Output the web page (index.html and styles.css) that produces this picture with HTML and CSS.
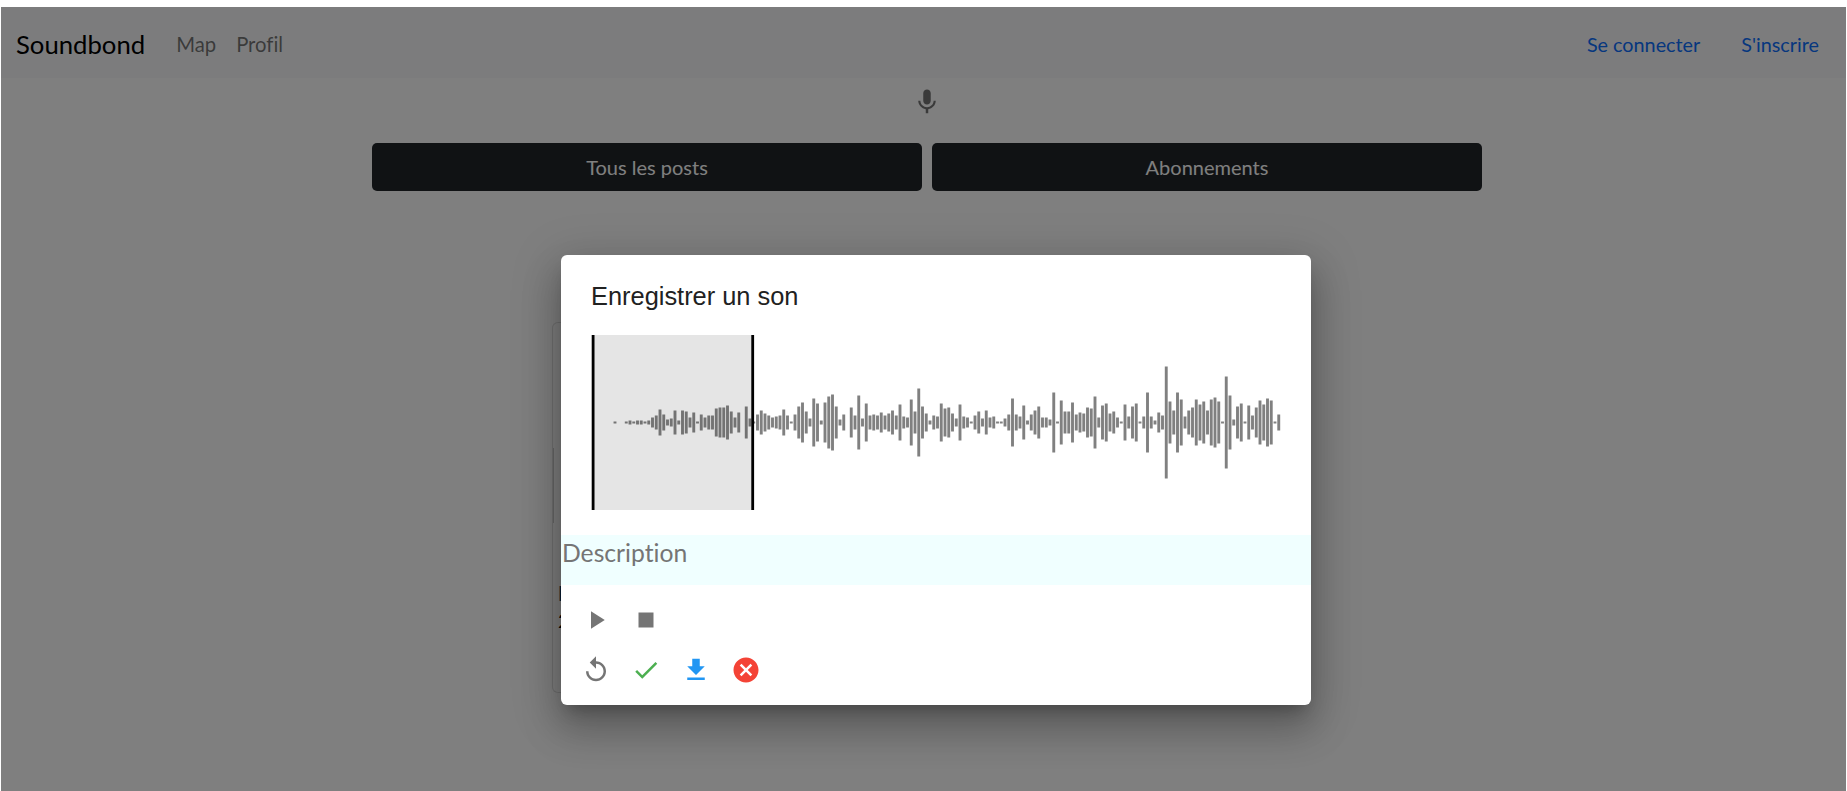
FILE: index.html
```html
<!DOCTYPE html>
<html lang="fr">
<head>
    <meta charset="UTF-8">
    <title>Soundbond</title>
    <link rel="stylesheet" href="styles.css">
</head>
<body>
    <div class="page">
        <nav class="navbar">
            <a class="brand">Soundbond</a>
            <a class="nav-link">Map</a>
            <a class="nav-link">Profil</a>
            <div class="nav-right">
                <a class="auth-link">Se connecter</a>
                <a class="auth-link">S'inscrire</a>
            </div>
        </nav>

        <div class="main">
            <svg class="mic" viewBox="0 0 24 24"><path d="M12 14c1.66 0 2.99-1.34 2.99-3L15 5c0-1.66-1.34-3-3-3S9 3.34 9 5v6c0 1.66 1.34 3 3 3zm5.3-3c0 3-2.54 5.1-5.3 5.1S6.7 14 6.7 11H5c0 3.41 2.72 6.23 6 6.72V21h2v-3.28c3.28-.48 6-3.3 6-6.72h-1.7z"/></svg>
            <div class="tabs">
                <button class="tab">Tous les posts</button>
                <button class="tab">Abonnements</button>
            </div>
            <div class="post">
                <div class="post-player"></div>
                <div class="post-author">D</div>
                <div class="post-date">2</div>
            </div>
        </div>

        <div class="backdrop"></div>

        <div class="dialog">
            <h2 class="dialog-title">Enregistrer un son</h2>
            <svg id="wave" class="wave" viewBox="0 0 690 175"></svg>
            <div class="description">Description</div>
            <div class="controls">
                <svg class="icon grey" viewBox="0 0 24 24"><path d="M8 5v14l11-7z"/></svg>
                <svg class="icon grey" viewBox="0 0 24 24"><path d="M6 6h12v12H6z"/></svg>
            </div>
            <div class="controls">
                <svg class="icon grey" viewBox="0 0 24 24"><path d="M12 5V1L7 6l5 5V7c3.31 0 6 2.69 6 6s-2.69 6-6 6-6-2.69-6-6H4c0 4.42 3.58 8 8 8s8-3.58 8-8-3.58-8-8-8z"/></svg>
                <svg class="icon green" viewBox="0 0 24 24"><path d="M9 16.17L4.83 12l-1.42 1.41L9 19 21 7l-1.41-1.41z"/></svg>
                <svg class="icon blue" viewBox="0 0 24 24"><path d="M19 9h-4V3H9v6H5l7 7 7-7zM5 18v2h14v-2H5z"/></svg>
                <svg class="icon red" viewBox="0 0 24 24"><path d="M12 2C6.47 2 2 6.47 2 12s4.47 10 10 10 10-4.47 10-10S17.53 2 12 2zm5 13.59L15.59 17 12 13.41 8.41 17 7 15.59 10.59 12 7 8.41 8.41 7 12 10.59 15.59 7 17 8.41 13.41 12 17 15.59z"/></svg>
            </div>
        </div>
    </div>

    <script src="wave.js"></script>
</body>
</html>
```

FILE: styles.css
```css
html, body {
    height: 100%;
    overflow: hidden;
}
body {
    margin: 0;
    background-color: #fff;
    font-family: Lato, "Noto Sans", sans-serif;
    font-variant-ligatures: none;
}
.page {
    position: relative;
    height: 784px;
    margin: 7px 1px 0;
    overflow: hidden;
}
.navbar {
    display: flex;
    align-items: center;
    height: 71px;
    padding: 3px 27px 0 15px;
    box-sizing: border-box;
    background-color: #f8f9fa;
}
.brand {
    margin-right: 31px;
    font-size: 25.7px;
    color: #000;
}
.nav-link {
    margin-right: 20px;
    font-size: 20.3px;
    color: rgba(0,0,0,.55);
}
.nav-right {
    display: flex;
    gap: 41px;
    margin-left: auto;
}
.auth-link {
    font-size: 19.8px;
    color: #0d6efd;
}
.main {
    display: flex;
    flex-direction: column;
    align-items: center;
    padding-left: 7px;
}
.mic {
    width: 30px;
    height: 30px;
    margin-top: 9px;
    fill: #757575;
}
.tabs {
    display: flex;
    gap: 10px;
    margin-top: 26px;
}
.tab {
    width: 550px;
    height: 48px;
    border: 0;
    border-radius: 5px;
    background-color: #212529;
    color: #fff;
    font-family: inherit;
    font-size: 20px;
}
.post {
    width: 750px;
    height: 371px;
    margin-top: 131px;
    padding-top: 125px;
    box-sizing: border-box;
    border: 1px solid rgba(0,0,0,.125);
    border-radius: 6px;
    background-color: #fff;
}
.post-player {
    height: 75px;
    border-left: 1px solid rgba(0,0,0,.2);
}
.post-author {
    margin: 58px 0 0 5px;
    font-size: 20px;
    font-weight: bold;
    color: #0d3b66;
}
.post-date {
    margin: 3px 0 0 5px;
    font-size: 20px;
}
.backdrop {
    position: absolute;
    inset: 0;
    background-color: rgba(0,0,0,.5);
}
.dialog {
    position: absolute;
    top: 248px;
    left: 560px;
    width: 750px;
    height: 450px;
    border-radius: 6px;
    background-color: #fff;
    box-shadow: 0 11px 15px -7px rgba(0,0,0,.25), 0 24px 38px 3px rgba(0,0,0,.18), 0 9px 46px 8px rgba(0,0,0,.15);
}
.dialog-title {
    height: 80px;
    margin: 0;
    padding: 26px 0 0 30px;
    box-sizing: border-box;
    font-family: "Liberation Sans", Arial, sans-serif;
    font-size: 25.4px;
    font-weight: normal;
    line-height: 30px;
    color: #212121;
}
.wave {
    display: block;
    width: 690px;
    height: 175px;
    margin-left: 31px;
    overflow: visible;
}
.description {
    height: 50px;
    margin: 25px 0 20px;
    padding-left: 1px;
    background-color: #f0ffff;
    font-size: 24.7px;
    line-height: 36px;
    color: #757575;
}
.controls {
    display: flex;
    gap: 20px;
    margin: 0 0 20px 20px;
}
.icon {
    width: 30px;
    height: 30px;
}
.grey { fill: #757575; }
.green { fill: #4caf50; }
.blue { fill: #2196f3; }
.red { fill: #f44336; }
```

FILE: wave.js
```js
// bar heights of the recorded sound, one every 3.75px
const heights = [
    2,0,0,2,4,2,4,4,2,4,10,14,26,16,6,8,24,4,24,22,10,20,2,16,10,14,14,28,30,30,34,22,10,20,0,32,8,
    2,16,24,18,14,10,12,14,26,14,2,16,32,40,22,8,48,38,4,40,52,56,32,6,16,0,30,14,54,8,38,14,16,14,
    20,14,18,24,14,36,12,10,46,22,68,32,18,4,14,12,38,28,30,18,8,36,12,10,2,14,22,8,24,10,12,2,2,8,16,
    48,16,12,34,4,16,24,32,10,10,6,60,2,44,22,22,40,16,20,
    18,30,28,52,10,34,38,18,22,10,2,36,12,32,38,2,12,60,12,4,20,14,112,42,24,60,46,12,24,30,
    46,36,42,24,46,50,42,2,92,54,6,32,38,2,34,14,30,44,36,48,44,2,16
];

const wave = document.getElementById('wave');

function addRect(x, y, width, height, fill) {
    const rect = document.createElementNS('http://www.w3.org/2000/svg', 'rect');
    rect.setAttribute('x', x);
    rect.setAttribute('y', y);
    rect.setAttribute('width', width);
    rect.setAttribute('height', height);
    rect.setAttribute('fill', fill);
    wave.appendChild(rect);
}

heights.forEach((h, i) => {
    if (h > 0) {
        addRect(21.55 + i * 3.75, 87.5 - h / 2, 2.9, h, '#808080');
    }
});

// selected region with its two handles
addRect(0, 0, 162, 175, 'rgba(0,0,0,.1)');
addRect(-0.3, 0, 2.8, 175, '#000');
addRect(159.3, 0, 2.8, 175, '#000');
```
